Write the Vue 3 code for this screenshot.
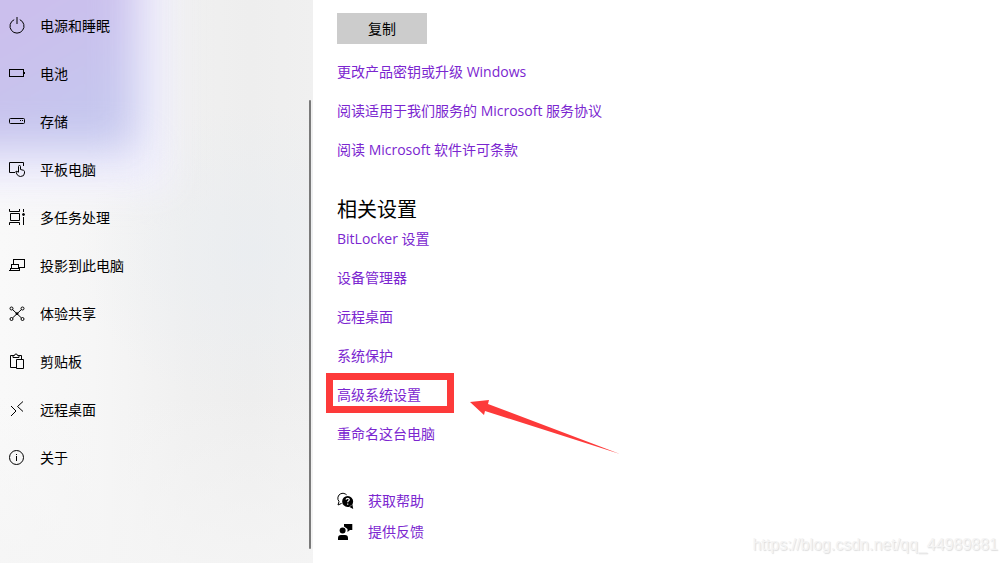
<script setup>
const navItems = [
  { id: 'power', label: '电源和睡眠' },
  { id: 'battery', label: '电池' },
  { id: 'storage', label: '存储' },
  { id: 'tablet', label: '平板电脑' },
  { id: 'multitask', label: '多任务处理' },
  { id: 'project', label: '投影到此电脑' },
  { id: 'share', label: '体验共享' },
  { id: 'clipboard', label: '剪贴板' },
  { id: 'remote', label: '远程桌面' },
  { id: 'about', label: '关于' },
]

const licenceLinks = [
  '更改产品密钥或升级 Windows',
  '阅读适用于我们服务的 Microsoft 服务协议',
  '阅读 Microsoft 软件许可条款',
]

const relatedLinks = [
  { label: 'BitLocker 设置' },
  { label: '设备管理器' },
  { label: '远程桌面' },
  { label: '系统保护' },
  { label: '高级系统设置', marked: true },
  { label: '重命名这台电脑' },
]
</script>

<template>
  <div class="settings">
    <nav class="sidebar" aria-label="系统">
      <a v-for="item in navItems" :key="item.id" class="nav-item" href="#">
        <svg class="icon" viewBox="0 0 20 20" aria-hidden="true">
          <g v-if="item.id === 'power'">
            <path d="M7.2 3.7a7 7 0 1 0 5.6 0" />
            <path d="M10 1v7" />
          </g>
          <g v-else-if="item.id === 'battery'" class="crisp">
            <path d="M2.5 5.5h14v7h-14zM17.5 8v2" />
          </g>
          <g v-else-if="item.id === 'storage'">
            <rect x="2.5" y="6.5" width="15" height="5" rx="1" />
            <path d="M13 8.5h1M15 8.5h1" />
          </g>
          <g v-else-if="item.id === 'tablet'">
            <path d="M8 12.5H2.5v-10h14V6" />
            <path d="M11.500 12V6.500q0-1 1-1t1 1V9.500l3 .8q1 .3 1 1.400v1.300q0 3.500-4 3.500-2.500 0-3.700-2.500l-1-2.500q1-1 2.700 1" />
          </g>
          <g v-else-if="item.id === 'multitask'">
            <path d="M2.5 1v2.500h10V1M3.500 5.500h9v7h-9zM2.500 17v-2.500h10V17M16.500 1v3M16.500 9v8" />
            <circle class="dot" cx="16.500" cy="6.500" r="1" />
          </g>
          <g v-else-if="item.id === 'project'" class="crisp">
            <path d="M6.5 8V3.500h11v8H12M4.500 8.500h7v4h-7zM2 14.500h11M3.500 12v2M12.500 12v2" />
          </g>
          <g v-else-if="item.id === 'share'">
            <path d="M5.5 5.500l9 8.500M14.500 5.500L5.500 14" />
            <circle class="dot" cx="10" cy="9.700" r="1" />
            <circle cx="4.500" cy="4.500" r="1.500" />
            <circle cx="15.500" cy="4.500" r="1.500" />
            <circle cx="4.500" cy="15" r="1.500" />
            <circle cx="15.500" cy="15" r="1.500" />
          </g>
          <g v-else-if="item.id === 'clipboard'">
            <path d="M9 15.500H3.500v-12H6M12 3.500h2.500V7M6 5.500h6v-2h-1.500q0-1.500-1.500-1.500t-1.500 1.500H6zM9.500 7.500h7v9h-7z" />
          </g>
          <g v-else-if="item.id === 'remote'">
            <path d="M4 6l5 5-5 5M16 1.500l-5.500 5L16 11.500" />
          </g>
          <g v-else>
            <circle cx="9.500" cy="9.500" r="7" />
            <path d="M9.500 8v5M9.500 6v1" />
          </g>
        </svg>
        <span>{{ item.label }}</span>
      </a>
      <div class="scrollbar" aria-hidden="true"></div>
    </nav>

    <main class="content">
      <button class="copy" type="button">复制</button>

      <ul class="links">
        <li v-for="text in licenceLinks" :key="text"><a href="#">{{ text }}</a></li>
      </ul>

      <h2>相关设置</h2>
      <ul class="links">
        <li v-for="link in relatedLinks" :key="link.label">
          <a href="#">{{ link.label }}</a>
          <span v-if="link.marked" class="frame" aria-hidden="true"></span>
          <svg v-if="link.marked" class="arrow" viewBox="0 0 150 56" aria-hidden="true">
            <path d="M0 2L19 0 18 4 150 54 15 11 14 15z" />
          </svg>
        </li>
      </ul>

      <ul class="support">
        <li>
          <svg class="help-icon" viewBox="0 0 18 18" aria-hidden="true">
            <path class="line" d="M1 13l1-3.500A5 5 0 1 1 5 11.200L1 13z" />
            <circle class="halo" cx="10.700" cy="9.500" r="6.500" />
            <path d="M10.700 4a5.500 5.500 0 1 1-.1 11 5.500 5.500 0 0 1 .1-11zM12 14.800l4.200 2.200-.8-4.500z" />
            <path class="question" d="M9 7.600q.2-1.300 1.700-1.300t1.600 1.300q0 .8-.9 1.300-.7.400-.7 1.300M10.700 11.500v1.300" />
          </svg>
          <a href="#">获取帮助</a>
        </li>
        <li>
          <svg class="help-icon" viewBox="0 0 18 18" aria-hidden="true">
            <circle cx="5.600" cy="7.500" r="3" />
            <path d="M1 17v-2q0-3 3-3h4q3 0 3 3v2zM7 1h8.300v6h-2.300l-2.500 2V6L7 3.500z" />
          </svg>
          <a href="#">提供反馈</a>
        </li>
      </ul>

      <p class="watermark">https://blog.csdn.net/qq_44989881</p>
    </main>
  </div>
</template>

<style>
body {
  margin: 0;
  background: #fff;
}
</style>

<style scoped>
.settings {
  display: flex;
  min-height: 100vh;
  font: 14px/20px "Open Sans", "Noto Sans CJK SC", sans-serif;
  color: #000;
}

.sidebar {
  position: relative;
  isolation: isolate;
  overflow: hidden;
  box-sizing: border-box;
  flex: 0 0 313px;
  padding-top: 2px;
  background:
    linear-gradient(180deg, transparent 70%, rgba(245, 245, 245, 0.8)),
    radial-gradient(ellipse 170px 150px at 80% 45%, rgba(233, 237, 241, 0.7), transparent),
    linear-gradient(90deg, #f9f9f9, #f6f6f6 30%, #f0f0f0 60%, #eeeeee 80%, #f0f0f0);
}

.sidebar::before,
.sidebar::after {
  content: "";
  position: absolute;
  z-index: -1;
  top: -80px;
  left: -80px;
}

.sidebar::before {
  width: 250px;
  height: 270px;
  background: #f1f0fc;
  filter: blur(18px);
}

.sidebar::after {
  width: 216px;
  height: 230px;
  background: linear-gradient(150deg, #cbbfed 45%, #c5c7ee 85%);
  filter: blur(20px);
}

.nav-item {
  display: flex;
  align-items: center;
  gap: 13px;
  height: 48px;
  padding-left: 7px;
  color: inherit;
  text-decoration: none;
}

.icon {
  width: 20px;
  height: 20px;
  fill: none;
  stroke: #000;
  stroke-width: 1;
}

.crisp {
  shape-rendering: crispEdges;
}

.dot {
  fill: #000;
}

.scrollbar {
  position: absolute;
  top: 100px;
  right: 2px;
  bottom: 14px;
  width: 2px;
  border-radius: 1px;
  background: #7a7a7a;
}

.content {
  position: relative;
  flex: 1;
  padding: 13px 24px 0;
}

.copy {
  display: block;
  width: 90px;
  height: 31px;
  padding: 0;
  border: 0;
  background: #ccc;
  font: inherit;
  color: inherit;
}

ul {
  margin: 0;
  padding: 0;
  list-style: none;
}

.links {
  display: grid;
  gap: 19px;
}

.copy + .links {
  margin-top: 18px;
}

.links li {
  position: relative;
  height: 20px;
}

.content a {
  color: #7b26d0;
  text-decoration: none;
}

h2 {
  margin: 35px 0 4px;
  font-size: 20px;
  line-height: 30px;
  font-weight: 400;
}

.frame {
  position: absolute;
  top: -12px;
  left: -11px;
  box-sizing: border-box;
  width: 128px;
  height: 40px;
  border: 7px solid #fd3a3a;
}

.arrow {
  position: absolute;
  top: 15px;
  left: 133px;
  width: 150px;
  height: 56px;
  fill: #fd3a3a;
}

.support {
  display: grid;
  gap: 11px;
  margin-top: 47px;
}

.support li {
  display: flex;
  align-items: center;
  gap: 13px;
  height: 20px;
}

.help-icon {
  width: 18px;
  height: 18px;
}

.line {
  fill: none;
  stroke: #000;
}

.halo {
  fill: #fff;
}

.question {
  fill: none;
  stroke: #fff;
  stroke-width: 1.2;
}

.watermark {
  position: absolute;
  right: 8px;
  bottom: 8px;
  margin: 0;
  font: 16px/20px "Liberation Sans", sans-serif;
  color: #f4f4f4;
  text-shadow: 1px 1px 1px #ddd;
}
</style>
